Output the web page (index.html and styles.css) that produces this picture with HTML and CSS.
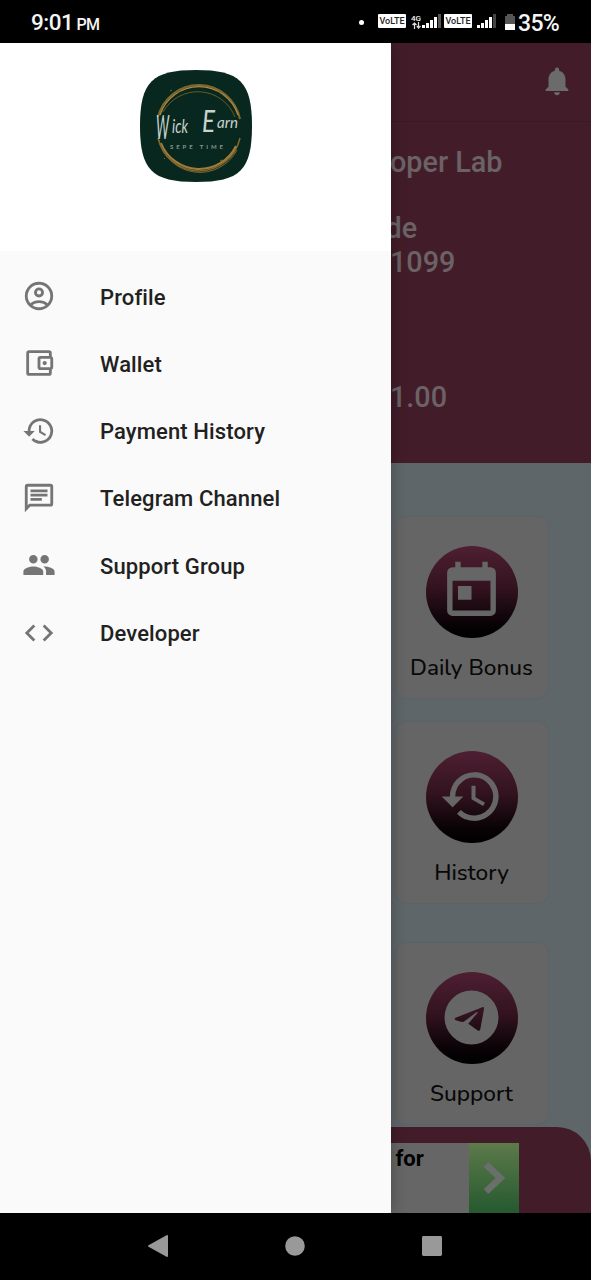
FILE: index.html
```html
<!DOCTYPE html>
<html lang="en">
<head>
    <meta charset="UTF-8">
    <meta name="viewport" content="width=device-width, initial-scale=1.0">
    <title>Wick Earn</title>
    <link rel="stylesheet" href="styles.css">
</head>
<body>
    <div class="phone">
        <div class="status-bar">
            <div class="clock">9:01 <small>PM</small></div>
            <div class="status-icons">
                <span class="dot"></span>
                <span class="volte">VoLTE</span>
                <span class="network"><b>4G</b><svg viewBox="0 0 9 7"><path d="M2.500 7V1M.5 3l2-2 2 2M6.500 0v6M4.800 4l1.700 2 2-2" fill="none" stroke="#ddd" stroke-width="1.200"/></svg></span>
                <svg class="signal" viewBox="0 0 19 14"><path d="M0 11h3v3H0zM4 9h3v5H4zM8 6h3v8H8zM12 3h3v11h-3z" fill="#fff"/><path d="M16 0h3v14h-3z" fill="#555"/></svg>
                <span class="volte second">VoLTE</span>
                <svg class="signal second" viewBox="0 0 19 14"><path d="M0 11h3v3H0zM4 9h3v5H4zM8 6h3v8H8zM12 3h3v11h-3z" fill="#fff"/><path d="M16 0h3v14h-3z" fill="#444"/></svg>
                <svg class="battery" viewBox="0 0 10 16"><path d="M0 2h2V0h6v2h2v8H0z" fill="#555"/><path d="M0 10h10v6H0z" fill="#fff"/></svg>
                <span class="percent">35%</span>
            </div>
        </div>

        <div class="screen">
            <nav class="drawer">
                <div class="drawer-header">
                    <svg class="logo" viewBox="0 0 112 112">
                        <path d="M56 0C100 0 112 12 112 56s-12 56-56 56S0 100 0 56 12 0 56 0z" fill="#08281f"/>
                        <g fill="none" stroke="#80662f">
                            <path d="M18 47A42 42 0 0 1 100 49" stroke-width="2"/>
                            <path d="M20 45A41 41 0 0 1 98 45" stroke-width="1.200" stroke="#b08b43"/>
                            <path d="M23 42A40 40 0 0 1 95 47" stroke-width=".8"/>
                            <path d="M18 68A42 42 0 0 0 100 68" stroke-width="1.500"/>
                            <path d="M21 73A41 41 0 0 0 96 76" stroke-width="2" stroke="#a07c38"/>
                            <path d="M19 70A42 42 0 0 0 97 80" stroke-width="1"/>
                            <path d="M30 21l2-1M78 20l1 1M88 28l1 1M24 88l1 1M80 91l2-1M92 84l1 1" stroke-width="1"/>
                        </g>
                        <g class="logo-name">
                            <text x="16" y="69" font-size="32" textLength="13" lengthAdjust="spacingAndGlyphs">W</text>
                            <text x="32" y="63" font-size="20" textLength="16" lengthAdjust="spacingAndGlyphs">ick</text>
                            <text x="62" y="62" font-size="31" textLength="13" lengthAdjust="spacingAndGlyphs">E</text>
                            <text x="77" y="58" font-size="15" textLength="21" lengthAdjust="spacingAndGlyphs">arn</text>
                        </g>
                        <text class="logo-sub" x="30" y="79" textLength="53">SEPE TIME</text>
                    </svg>
                </div>
                <ul class="menu">
                    <li>
                        <svg viewBox="0 0 24 24"><path fill-rule="evenodd" d="M12 2a10 10 0 1 0 0 20 10 10 0 0 0 0-20zM7.350 18.500C8.660 17.560 10.260 17 12 17s3.340.56 4.650 1.500C15.340 19.440 13.740 20 12 20s-3.340-.56-4.650-1.500zm10.790-1.380C16.450 15.800 14.320 15 12 15s-4.450.8-6.140 2.120A8 8 0 1 1 20 12c0 1.950-.7 3.730-1.860 5.120zM12 6a3.500 3.500 0 1 0 0 7 3.500 3.500 0 0 0 0-7zm0 5a1.500 1.500 0 1 1 0-3 1.500 1.500 0 0 1 0 3z"/></svg>
                        <span>Profile</span>
                    </li>
                    <li>
                        <svg viewBox="0 0 24 24"><path fill-rule="evenodd" d="M21 7.280V5a2 2 0 0 0-2-2H5a2 2 0 0 0-2 2v14a2 2 0 0 0 2 2h14a2 2 0 0 0 2-2v-2.280A2 2 0 0 0 22 15V9a2 2 0 0 0-1-1.720zM20 9v6h-7V9h7zM5 19V5h14v2h-6a2 2 0 0 0-2 2v6a2 2 0 0 0 2 2h6v2H5z"/><circle cx="16" cy="12" r="1.500"/></svg>
                        <span>Wallet</span>
                    </li>
                    <li>
                        <svg viewBox="0 0 24 24"><path d="M13 3a9 9 0 0 0-9 9H1l3.890 3.890.07.14L9 12H6a7 7 0 1 1 2.060 4.940l-1.420 1.420A9 9 0 1 0 13 3zm-1 5v5l4.280 2.540.72-1.210-3.500-2.080V8H12z"/></svg>
                        <span>Payment History</span>
                    </li>
                    <li>
                        <svg viewBox="0 0 24 24"><path d="M4 4h16v12H5.170L4 17.170V4m0-2a2 2 0 0 0-1.990 2L2 22l4-4h14a2 2 0 0 0 2-2V4a2 2 0 0 0-2-2H4zm2 10h8v2H6v-2zm0-3h12v2H6V9zm0-3h12v2H6V6z"/></svg>
                        <span>Telegram Channel</span>
                    </li>
                    <li>
                        <svg viewBox="0 0 24 24"><path d="M16 11a3 3 0 1 0 0-6 3 3 0 0 0 0 6zm-8 0a3 3 0 1 0 0-6 3 3 0 0 0 0 6zm0 2c-2.330 0-7 1.170-7 3.500V19h14v-2.500C15 14.170 10.330 13 8 13zm8 0c-.29 0-.62.020-.97.050 1.160.84 1.970 1.970 1.970 3.450V19h6v-2.500c0-2.330-4.670-3.500-7-3.500z"/></svg>
                        <span>Support Group</span>
                    </li>
                    <li>
                        <svg viewBox="0 0 24 24"><path d="M9.400 16.600 4.800 12l4.600-4.600L8 6l-6 6 6 6 1.400-1.400zm5.200 0 4.600-4.600-4.600-4.600L16 6l6 6-6 6-1.400-1.400z"/></svg>
                        <span>Developer</span>
                    </li>
                </ul>
            </nav>

            <main class="content">
                <div class="app-bar">
                    <svg viewBox="0 0 24 24"><path d="M12 22a2 2 0 0 0 2-2h-4a2 2 0 0 0 2 2zm6-6v-5c0-3.070-1.640-5.640-4.500-6.320V4a1.500 1.500 0 0 0-3 0v.68C7.630 5.360 6 7.920 6 11v5l-2 2v1h16v-1l-2-2z"/></svg>
                </div>
                <div class="account">
                    <p class="name">oper Lab</p>
                    <p class="code-label">de</p>
                    <p class="code">1099</p>
                    <p class="balance">1.00</p>
                </div>

                <div class="cards">
                    <div class="card">
                        <div class="circle">
                            <svg viewBox="0 0 24 24"><path fill-rule="evenodd" d="M19 3h-1V1h-2v2H8V1H6v2H5a2 2 0 0 0-2 2v14a2 2 0 0 0 2 2h14a2 2 0 0 0 2-2V5a2 2 0 0 0-2-2zm0 16H5V8h14v11zM7 10h5v5H7z"/></svg>
                        </div>
                        <span>Daily Bonus</span>
                    </div>
                    <div class="card">
                        <div class="circle">
                            <svg viewBox="0 0 24 24"><path d="M13 3a9 9 0 0 0-9 9H1l3.890 3.890.07.14L9 12H6a7 7 0 1 1 2.060 4.940l-1.420 1.420A9 9 0 1 0 13 3zm-1 5v5l4.280 2.540.72-1.210-3.500-2.080V8H12z"/></svg>
                        </div>
                        <span>History</span>
                    </div>
                    <div class="card support">
                        <div class="circle">
                            <svg viewBox="0 0 24 24"><path fill-rule="evenodd" d="M12 4a8 8 0 1 0 0 16 8 8 0 0 0 0-16zM7.300 12.100 15.200 8.950q.6-.2.500.5l-1.100 6q-.2.800-.85.350l-2.700-1.950 2.700-3.200q.15-.4-.3-.2l-3.650 2.750q-.5.350-2.400-.35-.7-.4-.1-.75z"/></svg>
                        </div>
                        <span>Support</span>
                    </div>
                </div>

                <div class="bottom-bar">
                    <div class="ad">
                        <b>for</b>
                        <div class="ad-arrow">
                            <svg viewBox="0 0 24 32"><path d="M3 2.500l14.500 13.500L3 29.500" fill="none" stroke="#6b6f6b" stroke-width="6.500"/></svg>
                        </div>
                    </div>
                </div>
            </main>
        </div>

        <div class="nav-bar">
            <svg viewBox="0 0 20 22"><path d="M19 1v20L1 11z" stroke-width="2" stroke-linejoin="round"/></svg>
            <svg viewBox="0 0 20 20"><circle cx="10" cy="10" r="9.800"/></svg>
            <svg viewBox="0 0 21 21"><rect width="21" height="21" rx="1.500"/></svg>
        </div>
    </div>
</body>
</html>
```
FILE: styles.css
```css
* {
    box-sizing: border-box;
}
body {
    margin: 0;
    font-family: Roboto, sans-serif;
    background: #000;
}
.phone {
    width: 591px;
    height: 1280px;
    display: flex;
    flex-direction: column;
    overflow: hidden;
}

/* status bar */
.status-bar {
    height: 43px;
    flex: none;
    display: flex;
    justify-content: space-between;
    align-items: center;
    padding: 2px 32px 0 31px;
    color: #f5f5f5;
}
.clock {
    font-size: 22.5px;
    font-weight: 500;
    line-height: 42px;
    letter-spacing: -0.5px;
    padding-top: 2px;
    white-space: nowrap;
}
.clock small {
    font-size: 16px;
    margin-left: -2px;
}
.status-icons {
    display: flex;
    align-items: center;
}
.dot {
    width: 5px;
    height: 5px;
    border-radius: 50%;
    background: #fff;
    margin-right: 14px;
}
.volte {
    width: 28px;
    height: 14px;
    margin-top: -3px;
    border-radius: 1px;
    background: #fff;
    color: #222;
    font-size: 9px;
    font-weight: 500;
    line-height: 14px;
    text-align: center;
}
.volte.second {
    margin-left: 3px;
}
.network {
    display: flex;
    flex-direction: column;
    align-items: center;
    width: 10px;
    margin: -2px 1px 0 5px;
}
.network b {
    font-size: 8px;
    line-height: 7px;
    font-weight: 500;
}
.network svg {
    width: 9px;
    height: 7px;
}
.signal {
    width: 19px;
    height: 14px;
    margin-top: -3px;
}
.signal.second {
    margin-left: 5px;
}
.battery {
    width: 10px;
    height: 16px;
    margin: -2px 0 0 9px;
}
.percent {
    font-size: 23px;
    font-weight: 500;
    letter-spacing: -0.7px;
    margin: 1px 0 0 3px;
}

.screen {
    flex: 1;
    min-height: 0;
    display: flex;
}

/* drawer */
.drawer {
    position: relative;
    z-index: 2;
    width: 390.5px;
    flex: none;
    background: #fafafa;
    box-shadow: 0 0 14px rgba(0, 0, 0, 0.3);
}
.drawer-header {
    height: 208px;
    padding: 26.5px 0 0 139.5px;
    background: #fff;
}
.logo {
    display: block;
    width: 112px;
    height: 112px;
}
.logo-name {
    font-family: Lato, sans-serif;
    font-style: italic;
    font-weight: 400;
    fill: #c9d2ce;
}
.logo-sub {
    font-family: Lato, sans-serif;
    font-size: 6px;
    font-weight: 700;
    fill: #84968e;
}
.menu {
    list-style: none;
    margin: 0;
    padding: 12.4px 0 0 22px;
}
.menu li {
    height: 67.3px;
    display: flex;
    align-items: center;
    gap: 44px;
    color: #212121;
    font-size: 22px;
    font-weight: 500;
    letter-spacing: 0.12px;
}
.menu svg {
    width: 34px;
    height: 34px;
    margin-top: -2px;
    fill: #757575;
}

/* dimmed page next to the drawer */
.content {
    flex: 1;
    min-width: 0;
    display: flex;
    flex-direction: column;
    overflow: hidden;
    background: #5f666a;
}
.app-bar {
    height: 79px;
    flex: none;
    display: flex;
    justify-content: flex-end;
    align-items: center;
    padding: 0 17px 2px 0;
    background: #421d29;
    border-bottom: 1px solid #3a1924;
}
.app-bar svg {
    width: 34px;
    height: 34px;
    fill: #6a6b6a;
}
.account {
    height: 341px;
    flex: none;
    padding-top: 23px;
    background: #421d29;
    color: #6b6266;
    font-size: 28.8px;
    font-weight: 500;
    line-height: 34px;
}
.account p {
    margin: 0;
}
.account .code-label {
    margin: 32px 0 0 -5px;
}
.account .code,
.account .name,
.account .balance {
    margin-left: -0.5px;
}
.account .balance {
    margin-top: 101px;
}
.cards {
    flex: 1;
    padding: 54px 0 0 5px;
}
.card {
    width: 152px;
    height: 181px;
    margin-bottom: 24px;
    padding-top: 28.5px;
    border-radius: 10px;
    background: #656565;
    box-shadow: 0 0 2px rgba(80, 85, 90, 0.5);
    display: flex;
    flex-direction: column;
    align-items: center;
    font-family: Nunito, Lato, sans-serif;
    font-size: 22.6px;
    line-height: 30px;
    font-weight: 500;
    color: #080808;
    white-space: nowrap;
}
.card.support {
    margin-top: 40px;
    margin-bottom: 0;
}
.circle {
    width: 92px;
    height: 92px;
    flex: none;
    margin-bottom: 15.5px;
    border-radius: 50%;
    background: linear-gradient(#4e1f32, #33131f 45%, #080205 85%, #000);
    display: flex;
    justify-content: center;
    align-items: center;
}
.circle svg {
    width: 65px;
    height: 65px;
    fill: #666;
}
.support .circle svg {
    width: 81px;
    height: 81px;
}
.bottom-bar {
    height: 86px;
    flex: none;
    padding-top: 16px;
    border-top-right-radius: 34px;
    background: #421d29;
}
.ad {
    width: 128px;
    height: 70px;
    display: flex;
    justify-content: space-between;
    padding-left: 5px;
    background: #666;
    color: #000;
    font-size: 22px;
    line-height: 31px;
}
.ad-arrow {
    width: 50px;
    display: flex;
    justify-content: center;
    align-items: center;
    padding-left: 2px;
    background: linear-gradient(#5d7a4a, #25592f);
}
.ad-arrow svg {
    width: 24px;
    height: 34px;
}

/* android buttons */
.nav-bar {
    height: 67px;
    flex: none;
    display: flex;
    justify-content: space-between;
    align-items: center;
    padding: 0 149px 1px 148px;
    background: #000;
}
.nav-bar svg {
    width: 20px;
    height: 22px;
    fill: #999;
    stroke: #999;
    stroke-width: 0;
}
```
